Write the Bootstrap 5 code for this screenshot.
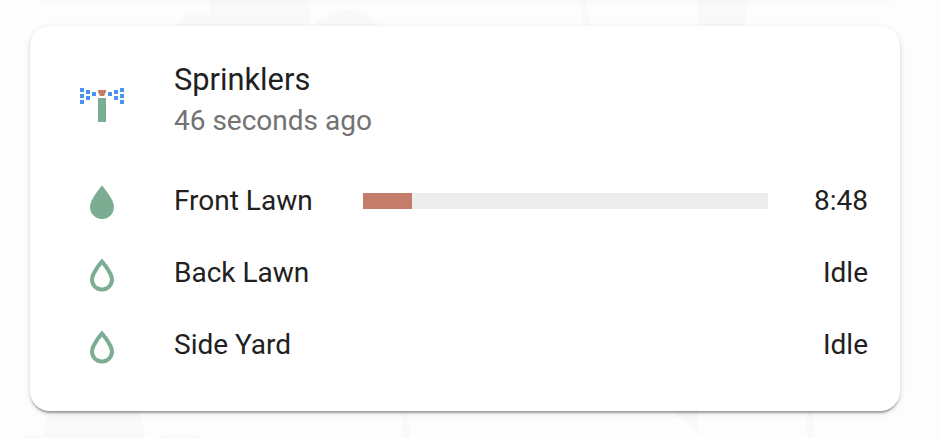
<!DOCTYPE html>
<html lang="en">
<head>
<meta charset="utf-8">
<meta name="viewport" content="width=device-width, initial-scale=1">
<title>Sprinklers</title>
<link href="https://cdn.jsdelivr.net/npm/bootstrap@5.3.0/dist/css/bootstrap.min.css" rel="stylesheet">
<style>
  body { background: #fdfdfd; font-family: Roboto, sans-serif; color: #212121; height: 438px; padding: 26px 40px 0 30px; -webkit-font-smoothing: antialiased; }
  .backdrop { z-index: 0; }
  .sprinkler-card { z-index: 1; height: 385px; border-radius: 20px; padding: 32px 32px 0;
    box-shadow: 0 4px 2px -2px rgba(0,0,0,.2), 0 2px 2px 0 rgba(0,0,0,.14), 0 2px 6px 0 rgba(0,0,0,.12); }
  .entity-icon { width: 80px; height: 48px; flex: none; margin-right: 32px; }
  .entity-icon svg { width: 48px; height: 48px; display: block; }
  .card-head { height: 80px; margin-bottom: 27px; }
  .head-name { font-size: 30.8px; line-height: 43px; }
  .head-time { font-size: 28px; line-height: 40px; color: #727272; }
  .zone { height: 72px; font-size: 28px; line-height: 40px; }
  .zone .entity-icon { margin-top: 4px; }
  .zone-name { width: 189px; }
  .zone .progress { width: 405px; height: 16px; border-radius: 0; background: #ededed; }
  .zone .progress-bar { background: #c47d6b; }
</style>
</head>
<body class="position-relative overflow-hidden">
<svg class="backdrop position-absolute top-0 start-0" width="940" height="438" viewBox="0 0 940 438" aria-hidden="true">
  <defs><linearGradient id="edge" x2="0" y2="1"><stop stop-color="#000" stop-opacity=".02"/><stop offset="1" stop-color="#000" stop-opacity="0"/></linearGradient></defs>
  <g fill="#f8f9f8">
    <path d="M210 0H305Q314 12 309 30H216Q208 14 210 0Z"/>
    <path d="M174 28Q184 12 201 12Q211 13 218 28Z"/>
    <path d="M313 28Q325 10 348 10Q370 12 384 30Z"/>
    <path d="M698 0H748Q748 13 743 30H698Z"/>
    <path d="M578 0H585Q589 14 590 30H583Q583 14 578 0Z"/>
    <path d="M49 405H134Q144 420 145 438H45Q43 420 49 405Z"/>
    <path d="M20 438Q33 434 45 438ZM158 438Q178 430 202 438Z"/>
    <path d="M400 405H407L410 438H404Z"/>
    <path d="M665 405H698V433Z"/>
    <path d="M807 405H813V438H807Z"/>
  </g>
  <rect x="40" width="850" height="4" fill="url(#edge)"/>
</svg>
<main class="card sprinkler-card border-0 bg-white">
  <header class="card-head d-flex align-items-start">
    <div class="entity-icon d-flex justify-content-center mt-4">
      <svg viewBox="0 0 48 48" shape-rendering="crispEdges">
        <path fill="#4a93f2" d="M2 6h4v4H2zM2 12h4v4H2zM2 18h4v4H2zM8 8h4v4H8zM8 14h4v4H8zM14 10h4v4h-4zM30 10h4v4h-4zM36 8h4v4h-4zM36 14h4v4h-4zM42 6h4v4h-4zM42 12h4v4h-4zM42 18h4v4h-4z"/>
        <path fill="#c47d6b" shape-rendering="auto" d="M20 8H28V10L26 14H22L20 10Z"/>
        <path fill="#7cad93" d="M20 16h8v24h-8z"/>
      </svg>
    </div>
    <div>
      <div class="head-name">Sprinklers</div>
      <div class="head-time">46 seconds ago</div>
    </div>
  </header>
  <div class="zone d-flex align-items-center">
    <div class="entity-icon d-flex justify-content-center">
      <svg viewBox="0 0 24 24"><path fill="#7cad93" d="M12,20A6,6 0 0,1 6,14C6,10 12,3.25 12,3.25C12,3.25 18,10 18,14A6,6 0 0,1 12,20Z"/></svg>
    </div>
    <div class="zone-name">Front Lawn</div>
    <div class="progress"><div class="progress-bar" style="width:12.1%"></div></div>
    <div class="ms-auto">8:48</div>
  </div>
  <div class="zone d-flex align-items-center">
    <div class="entity-icon d-flex justify-content-center">
      <svg viewBox="0 0 24 24"><path fill="#7cad93" d="M12,3.77L11.25,4.61C11.25,4.61 9.97,6.06 8.68,7.94C7.39,9.82 6,12.07 6,14.23A6,6 0 0,0 12,20.23A6,6 0 0,0 18,14.23C18,12.07 16.61,9.82 15.32,7.94C14.03,6.06 12.75,4.61 12.75,4.61L12,3.77M12,6.9C12.44,7.42 12.84,7.85 13.68,9.07C14.89,10.83 16,13.07 16,14.23C16,16.45 14.22,18.23 12,18.23C9.78,18.23 8,16.45 8,14.23C8,13.07 9.11,10.83 10.32,9.07C11.16,7.85 11.56,7.42 12,6.9Z"/></svg>
    </div>
    <div class="zone-name">Back Lawn</div>
    <div class="ms-auto">Idle</div>
  </div>
  <div class="zone d-flex align-items-center">
    <div class="entity-icon d-flex justify-content-center">
      <svg viewBox="0 0 24 24"><path fill="#7cad93" d="M12,3.77L11.25,4.61C11.25,4.61 9.97,6.06 8.68,7.94C7.39,9.82 6,12.07 6,14.23A6,6 0 0,0 12,20.23A6,6 0 0,0 18,14.23C18,12.07 16.61,9.82 15.32,7.94C14.03,6.06 12.75,4.61 12.75,4.61L12,3.77M12,6.9C12.44,7.42 12.84,7.85 13.68,9.07C14.89,10.83 16,13.07 16,14.23C16,16.45 14.22,18.23 12,18.23C9.78,18.23 8,16.45 8,14.23C8,13.07 9.11,10.83 10.32,9.07C11.16,7.85 11.56,7.42 12,6.9Z"/></svg>
    </div>
    <div class="zone-name">Side Yard</div>
    <div class="ms-auto">Idle</div>
  </div>
</main>
<script src="https://cdn.jsdelivr.net/npm/bootstrap@5.3.0/dist/js/bootstrap.bundle.min.js"></script>
</body>
</html>
